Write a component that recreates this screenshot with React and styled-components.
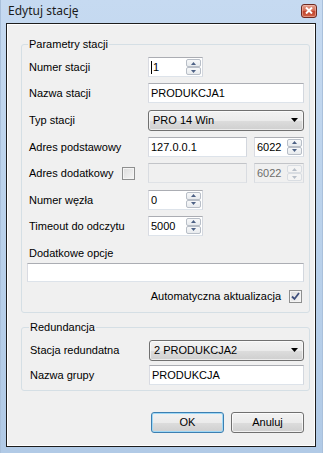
import styled, { createGlobalStyle } from 'styled-components';

const GlobalStyle = createGlobalStyle`
  html, body {
    margin: 0;
    padding: 0;
    background: #ffffff;
  }
  * {
    box-sizing: border-box;
  }
`;

const App = () => {
  return (
    <>
      <GlobalStyle />
      <Window>
        <TitleBar>
          <Title>Edytuj stację</Title>
          <CloseButton aria-label="Zamknij">
            <svg width="8" height="7" viewBox="0 0 8 7">
              <path d="M1 0.5 L7 6.5 M7 0.5 L1 6.5" stroke="#ffffff" strokeWidth="2" />
            </svg>
          </CloseButton>
        </TitleBar>

        <Client>
          <GroupBox>
            <Legend>Parametry stacji</Legend>
            <Rows>
              <Row>
                <Label>Numer stacji</Label>
                <Spinner value="1" caret />
              </Row>
              <Row>
                <Label>Nazwa stacji</Label>
                <TextBox>PRODUKCJA1</TextBox>
              </Row>
              <Row>
                <Label>Typ stacji</Label>
                <ComboBox text="PRO 14 Win" />
              </Row>
              <Row>
                <Label>Adres podstawowy</Label>
                <AddressPair>
                  <TextBox>127.0.0.1</TextBox>
                  <Spinner value="6022" wide />
                </AddressPair>
              </Row>
              <Row>
                <LabelWithCheck>
                  <span>Adres dodatkowy</span>
                  <CheckBox />
                </LabelWithCheck>
                <AddressPair>
                  <TextBox disabled />
                  <Spinner value="6022" wide disabled />
                </AddressPair>
              </Row>
              <Row>
                <Label>Numer węzła</Label>
                <Spinner value="0" />
              </Row>
              <Row>
                <Label>Timeout do odczytu</Label>
                <Spinner value="5000" />
              </Row>
            </Rows>

            <BlockLabel>Dodatkowe opcje</BlockLabel>
            <OptionsBox />

            <AutoRow>
              <span>Automatyczna aktualizacja</span>
              <CheckBox checked />
            </AutoRow>
          </GroupBox>

          <GroupBox second>
            <Legend>Redundancja</Legend>
            <RedundancyRows>
              <Row>
                <Label>Stacja redundatna</Label>
                <ComboBox text="2 PRODUKCJA2" />
              </Row>
              <Row>
                <Label>Nazwa grupy</Label>
                <TextBox>PRODUKCJA</TextBox>
              </Row>
            </RedundancyRows>
          </GroupBox>

          <ButtonBar>
            <Button $default>OK</Button>
            <Button>Anuluj</Button>
          </ButtonBar>
        </Client>
      </Window>
    </>
  );
}

const Spinner = ({ value, caret, wide, disabled }) => (
  <SpinBox $wide={wide} $disabled={disabled}>
    <SpinText>
      {caret && <Caret />}
      {value}
    </SpinText>
    <SpinButtons>
      <SpinButton $disabled={disabled}>
        <svg width="5" height="3" viewBox="0 0 5 3"><path d="M0 3 L2.5 0 L5 3 Z" fill={disabled ? '#b8bfc9' : '#4d6185'} /></svg>
      </SpinButton>
      <SpinButton $disabled={disabled}>
        <svg width="5" height="3" viewBox="0 0 5 3"><path d="M0 0 L2.5 3 L5 0 Z" fill={disabled ? '#b8bfc9' : '#4d6185'} /></svg>
      </SpinButton>
    </SpinButtons>
  </SpinBox>
);

const ComboBox = ({ text }) => (
  <Combo>
    <span>{text}</span>
    <svg width="7" height="4" viewBox="0 0 7 4"><path d="M0 0 L7 0 L3.5 4 Z" fill="#000000" /></svg>
  </Combo>
);

const CheckBox = ({ checked }) => (
  <Check>
    {checked && (
      <svg width="9" height="9" viewBox="0 0 9 9">
        <path d="M1 4.5 L3.5 7 L8 1" stroke="#3e4f7c" strokeWidth="1.8" fill="none" />
      </svg>
    )}
  </Check>
);

const Window = styled.div`
  width: 323px;
  height: 453px;
  display: flex;
  flex-direction: column;
  padding: 0 6px 6px 5px;
  background: linear-gradient(180deg, #c6daf1 0%, #bcd3ec 40%, #b1cae6 100%);
  border-left: 1px solid #a9c0db;
  border-right: 1px solid #a9c0db;
  font-family: "Liberation Sans", Arial, sans-serif;
  font-size: 11px;
  color: #000000;
`;

const TitleBar = styled.div`
  height: 23px;
  display: flex;
  align-items: center;
  justify-content: space-between;
  padding-left: 2px;
  margin-right: -1px;
`;

const Title = styled.div`
  font-family: "Noto Sans", "Liberation Sans", sans-serif;
  font-size: 12px;
  color: #1b1b1b;
  line-height: 14px;
  margin-top: -2px;
`;

const CloseButton = styled.div`
  width: 16px;
  height: 14px;
  margin-top: -2px;
  border: 1px solid #6e2a22;
  border-radius: 3px;
  background: linear-gradient(180deg, #e2a08f 0%, #d46f58 45%, #c0412a 55%, #d0654a 100%);
  box-shadow: inset 0 0 0 1px rgba(255, 210, 200, 0.45);
  display: flex;
  align-items: center;
  justify-content: center;
`;

const Client = styled.div`
  flex: 1;
  display: flex;
  flex-direction: column;
  background: #f0f0f0;
  border: 1px solid #1d1d1d;
  box-shadow: inset 1px 1px 0 #ffffff, inset -1px -1px 0 #ffffff;
  padding: 14px 5px 0 14px;
`;

const GroupBox = styled.fieldset`
  margin: ${p => (p.second ? '8px 0 0 0' : '0')};
  padding: ${p => (p.second ? '6px 5px 5px 8px' : '6px 5px 9px 7px')};
  border: 1px solid #d5dfe5;
  border-radius: 3px;
  min-width: 0;
`;

const Legend = styled.legend`
  padding: 0 1px;
  margin-left: -1px;
  line-height: 13px;
  font-size: 11px;
`;

const Rows = styled.div`
  display: flex;
  flex-direction: column;
  gap: 6.33px;
`;

const RedundancyRows = styled.div`
  display: flex;
  flex-direction: column;
  gap: 4px;
`;

const Row = styled.div`
  display: flex;
  align-items: center;
  min-height: 20px;
`;

const Label = styled.div`
  width: 119px;
  flex: none;
`;

const LabelWithCheck = styled.div`
  width: 119px;
  flex: none;
  display: flex;
  align-items: center;
  gap: 9px;
`;

const TextBox = styled.div`
  flex: 1;
  height: 20px;
  display: flex;
  align-items: center;
  padding-left: 2px;
  background: ${p => (p.disabled ? '#f0f0f0' : '#ffffff')};
  border: 1px solid;
  border-color: ${p => (p.disabled ? '#c2c4c8 #d9dce1 #dfe2e6 #d9dce1' : '#abadb3 #d3d7de #dde3ea #d9dbe2')};
  white-space: nowrap;
`;

const AddressPair = styled.div`
  flex: 1;
  display: flex;
  gap: 7px;
`;

const SpinBox = styled.div`
  width: ${p => (p.$wide ? '50px' : '55px')};
  flex: none;
  height: 20px;
  display: flex;
  align-items: stretch;
  padding: 1px;
  background: ${p => (p.$disabled ? '#f0f0f0' : '#ffffff')};
  border: 1px solid;
  border-color: ${p => (p.$disabled ? '#c2c4c8 #d9dce1 #dfe2e6 #d9dce1' : '#abadb3 #d3d7de #dde3ea #d9dbe2')};
  color: ${p => (p.$disabled ? '#6d6d6d' : '#000000')};
`;

const SpinText = styled.div`
  flex: 1;
  display: flex;
  align-items: center;
  padding-left: 1px;
`;

const Caret = styled.span`
  width: 1px;
  height: 13px;
  background: #000000;
  margin-right: 1px;
`;

const SpinButtons = styled.div`
  width: 15px;
  display: flex;
  flex-direction: column;
`;

const SpinButton = styled.div`
  flex: 1;
  display: flex;
  align-items: center;
  justify-content: center;
  border: 1px solid ${p => (p.$disabled ? '#d9dde2' : '#b8bec7')};
  border-radius: 2px;
  background: ${p => (p.$disabled ? '#f4f4f4' : 'linear-gradient(180deg, #f7f8f9 0%, #e8ebee 100%)')};
`;

const Combo = styled.div`
  flex: 1;
  height: 21px;
  display: flex;
  align-items: center;
  justify-content: space-between;
  padding: 0 5px 0 4px;
  border: 1px solid #707070;
  border-radius: 3px;
  background: linear-gradient(180deg, #f2f2f2 0%, #ebebeb 50%, #dddddd 50%, #cfcfcf 100%);
  box-shadow: inset 0 0 0 1px rgba(255, 255, 255, 0.6);
`;

const Check = styled.div`
  width: 13px;
  height: 13px;
  flex: none;
  display: flex;
  align-items: center;
  justify-content: center;
  border: 1px solid #8e8f8f;
  background: linear-gradient(135deg, #dcdcdc 0%, #f5f5f5 100%);
  box-shadow: inset 0 0 0 1px #f4f4f4;
`;

const BlockLabel = styled.div`
  margin-top: 11px;
  line-height: 13px;
`;

const OptionsBox = styled.div`
  height: 19px;
  margin: 3px 0 0 -2px;
  background: #ffffff;
  border: 1px solid;
  border-color: #abadb3 #d3d7de #dde3ea #d9dbe2;
`;

const AutoRow = styled.div`
  margin-top: 8px;
  display: flex;
  align-items: center;
  justify-content: flex-end;
  gap: 8px;
  padding-right: 2px;
`;

const ButtonBar = styled.div`
  margin-top: 21px;
  display: flex;
  justify-content: flex-end;
  gap: 7px;
  padding-right: 6px;
`;

const Button = styled.div`
  width: 73px;
  height: 21px;
  display: flex;
  align-items: center;
  justify-content: center;
  border: 1px solid ${p => (p.$default ? '#3c7fb1' : '#707070')};
  border-radius: 3px;
  background: linear-gradient(180deg, #f2f2f2 0%, #ebebeb 50%, #dddddd 50%, #cfcfcf 100%);
  box-shadow: ${p => (p.$default ? 'inset 0 0 0 1px #9fd8f6' : 'inset 0 0 0 1px rgba(255, 255, 255, 0.7)')};
`;

export default App;
